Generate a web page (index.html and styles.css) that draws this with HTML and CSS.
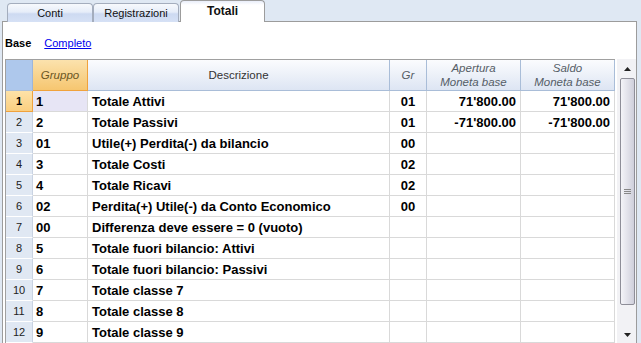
FILE: index.html
```html
<!DOCTYPE html>
<html lang="it">
<head>
<meta charset="utf-8">
<title>Totali</title>
<link rel="stylesheet" href="styles.css">
</head>
<body>
<div class="tabs">
  <div class="tab">Conti</div>
  <div class="tab">Registrazioni</div>
  <div class="tab active">Totali</div>
</div>
<div class="panel">
  <div class="views">
    <span class="view-current">Base</span>
    <a class="view-link" href="#">Completo</a>
  </div>
  <div class="grid-wrap">
    <table class="grid">
      <thead>
        <tr>
          <th class="c-num"></th>
          <th class="c-grp">Gruppo</th>
          <th class="c-desc">Descrizione</th>
          <th class="c-gr">Gr</th>
          <th class="c-amt">Apertura<br>Moneta base</th>
          <th class="c-amt">Saldo<br>Moneta base</th>
        </tr>
      </thead>
      <tbody>
        <tr class="sel"><td class="num">1</td><td class="grp">1</td><td>Totale Attivi</td><td class="gr">01</td><td class="amt">71'800.00</td><td class="amt">71'800.00</td></tr>
        <tr><td class="num">2</td><td class="grp">2</td><td>Totale Passivi</td><td class="gr">01</td><td class="amt">-71'800.00</td><td class="amt">-71'800.00</td></tr>
        <tr><td class="num">3</td><td class="grp">01</td><td>Utile(+) Perdita(-) da bilancio</td><td class="gr">00</td><td class="amt"></td><td class="amt"></td></tr>
        <tr><td class="num">4</td><td class="grp">3</td><td>Totale Costi</td><td class="gr">02</td><td class="amt"></td><td class="amt"></td></tr>
        <tr><td class="num">5</td><td class="grp">4</td><td>Totale Ricavi</td><td class="gr">02</td><td class="amt"></td><td class="amt"></td></tr>
        <tr><td class="num">6</td><td class="grp">02</td><td>Perdita(+) Utile(-) da Conto Economico</td><td class="gr">00</td><td class="amt"></td><td class="amt"></td></tr>
        <tr><td class="num">7</td><td class="grp">00</td><td>Differenza deve essere = 0 (vuoto)</td><td class="gr"></td><td class="amt"></td><td class="amt"></td></tr>
        <tr><td class="num">8</td><td class="grp">5</td><td>Totale fuori bilancio: Attivi</td><td class="gr"></td><td class="amt"></td><td class="amt"></td></tr>
        <tr><td class="num">9</td><td class="grp">6</td><td>Totale fuori bilancio: Passivi</td><td class="gr"></td><td class="amt"></td><td class="amt"></td></tr>
        <tr><td class="num">10</td><td class="grp">7</td><td>Totale classe 7</td><td class="gr"></td><td class="amt"></td><td class="amt"></td></tr>
        <tr><td class="num">11</td><td class="grp">8</td><td>Totale classe 8</td><td class="gr"></td><td class="amt"></td><td class="amt"></td></tr>
        <tr><td class="num">12</td><td class="grp">9</td><td>Totale classe 9</td><td class="gr"></td><td class="amt"></td><td class="amt"></td></tr>
      </tbody>
    </table>
    <div class="scrollbar">
      <div class="sb-btn sb-up"><svg width="7" height="4" viewBox="0 0 7 4"><path d="M0 4 L3.5 0 L7 4 Z" fill="#222"/></svg></div>
      <div class="sb-thumb"><span class="grip"></span></div>
      <div class="sb-track"></div>
      <div class="sb-btn sb-down"><svg width="7" height="4" viewBox="0 0 7 4"><path d="M0 0 L7 0 L3.5 4 Z" fill="#222"/></svg></div>
    </div>
  </div>
</div>
</body>
</html>
```
FILE: styles.css
```css
* { box-sizing: border-box; }
html, body { margin: 0; padding: 0; }
body {
  background: #dfe8f3;
  font-family: "Liberation Sans", Arial, sans-serif;
  height: 343px;
  overflow: hidden;
}
.tabs {
  height: 22px;
  display: flex;
  align-items: flex-end;
  padding-left: 7px;
}
.tab {
  width: 86px;
  height: 19px;
  border: 1px solid #a4adbd;
  border-bottom: none;
  border-radius: 4px 4px 0 0;
  background: linear-gradient(#f7f9fd 0%, #e6edf9 45%, #cddaf1 55%, #d6e1f5 100%);
  font-size: 11px;
  line-height: 19px;
  text-align: center;
  color: #111;
}
.tab.active {
  width: 85px;
  height: 22px;
  margin-left: 1px;
  background: linear-gradient(#e9eefa 0px, #ffffff 4px);
  border-color: #9c9c9c;
  font-weight: bold;
  font-size: 12px;
  line-height: 20px;
  position: relative;
  z-index: 1;
}
.panel {
  margin: -1px 4px 0 2px;
  border: 1px solid #9c9c9c;
  background: #fff;
  height: 323px;
}
.views {
  margin-top: 14px;
  height: 14px;
  line-height: 14px;
  font-size: 11px;
  padding-left: 2px;
  display: flex;
  gap: 13px;
}
.view-current { font-weight: bold; color: #000; }
.view-link { color: #0000ee; text-decoration: underline; }
.grid-wrap {
  margin-top: 9px;
  padding-left: 2px;
  display: flex;
  align-items: flex-start;
}
.grid {
  width: 610px;
  table-layout: fixed;
  border-collapse: separate;
  border-spacing: 0;
  border-left: 1px solid #a0a0a0;
  border-top: 1px solid #a0a0a0;
}
.grid th, .grid td {
  padding: 0;
  overflow: hidden;
  white-space: nowrap;
}
.grid th {
  height: 31px;
  font-size: 11.5px;
  line-height: 14px;
  font-weight: normal;
  font-style: italic;
  color: #555d66;
  text-align: center;
  background: linear-gradient(#fbfcfe, #dde5f3);
  border-right: 1px solid #a9bdd8;
  border-bottom: 1px solid #a9bdd8;
}
.grid th.c-num { width: 27px; background: #aec8ec; border-right-color: #9db6da; }
.grid th.c-grp {
  width: 55px;
  background: linear-gradient(#fbe2ad, #f6c670);
  border-right: 1px solid #f0a23c;
  border-bottom: 1px solid #f0a23c;
  color: #6a5624;
}
.grid th.c-desc { width: 302px; font-style: normal; color: #333; }
.grid th.c-gr { width: 37px; }
.grid th.c-amt { width: 94px; }
.grid td {
  height: 21px;
  font-family: "Liberation Sans", Arial, sans-serif;
  font-weight: bold;
  font-size: 13px;
  color: #000;
  border-right: 1px solid #d9d9d9;
  border-bottom: 1px solid #d9d9d9;
  padding-left: 4px;
}
.grid td.num {
  font-weight: normal;
  font-size: 11px;
  color: #222;
  text-align: center;
  padding: 0;
  background: #e0e8f3;
  border-right-color: #c9d3e2;
  border-bottom-color: #ffffff;
}
.grid td.grp { padding-left: 3px; }
.grid td.gr { text-align: center; padding: 0; }
.grid td.amt { text-align: right; padding: 0 4px 0 0; }
.grid tr.sel td.num {
  background: linear-gradient(#fde2a8, #fbcf80);
  border-bottom-color: #f0a23c;
  border-right-color: #f0a23c;
  font-weight: bold;
  color: #000;
}
.grid tr.sel td.grp { background: #e7e5f5; }
.scrollbar {
  margin-left: 2px;
  width: 19px;
  height: 284px;
  background: #f2f2f5;
  display: flex;
  flex-direction: column;
  align-items: center;
  padding-left: 2px;
}
.sb-btn {
  height: 19px;
  width: 15px;
  display: flex;
  align-items: center;
  justify-content: center;
}
.sb-thumb {
  height: 227px;
  width: 15px;
  border: 1px solid #8e8e98;
  border-radius: 2px;
  background: linear-gradient(90deg, #f4f4f8 0%, #e2e2ea 50%, #cfcfdb 100%);
  display: flex;
  align-items: center;
  justify-content: center;
}
.grip {
  width: 7px;
  height: 5px;
  border-top: 1px solid #888;
  border-bottom: 1px solid #888;
}
.grip::after {
  content: "";
  display: block;
  margin-top: 1px;
  height: 1px;
  background: #888;
}
.sb-track { flex: 1; width: 15px; }
.sb-down { height: 20px; padding-top: 4px; }
```
